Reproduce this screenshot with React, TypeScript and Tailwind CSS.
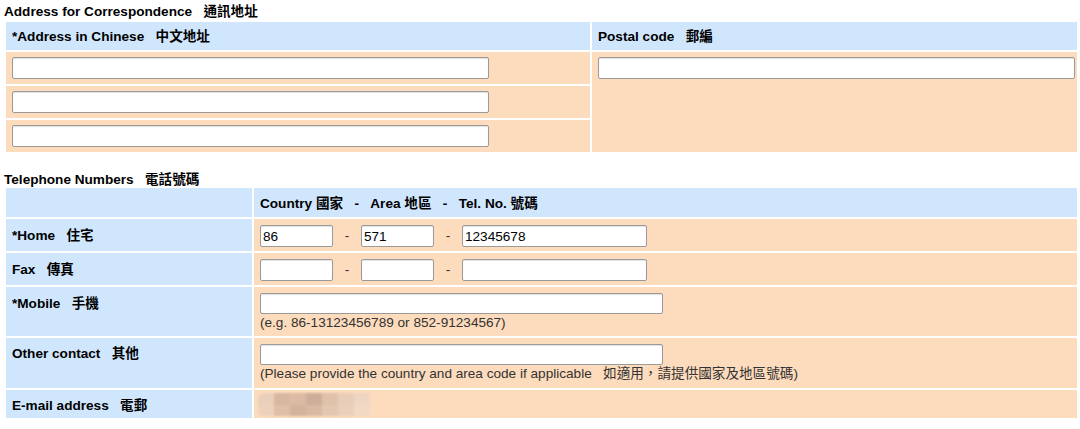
import React from "react";

const SP = "\u00a0\u00a0\u00a0";

function Field({ className, value = "" }: { className: string; value?: string }) {
  return (
    <input
      readOnly
      value={value}
      className={`block bg-white border border-[#9a9a9a] rounded-[2px] px-[2px] text-[13.6px] text-black outline-none shadow-[inset_0_1px_1px_rgba(0,0,0,0.12)] ${className}`}
    />
  );
}

function Dash() {
  return <span className="w-[28px] text-center text-[#333]">-</span>;
}

function Blur() {
  const top = ["#ead0bb", "#d8b79f", "#dbbba3", "#cdae98", "#e0c2aa", "#e8cdb8", "#efd6c2"];
  const bot = ["#ecd2bd", "#dfbfa7", "#d2b39c", "#d8b9a2", "#e4c7b0", "#eacfba", "#f1d9c6"];
  return (
    <div className="flex flex-col blur-[1px] rounded-[5px] overflow-hidden">
      <div className="flex">
        {top.map((c, i) => (
          <div key={i} className="w-[16px] h-[12px]" style={{ backgroundColor: c }} />
        ))}
      </div>
      <div className="flex">
        {bot.map((c, i) => (
          <div key={i} className="w-[16px] h-[11px]" style={{ backgroundColor: c }} />
        ))}
      </div>
    </div>
  );
}

export default function App() {
  return (
    <div className="w-[1080px] h-[429px] overflow-hidden bg-white pl-[4px] text-[13.6px] leading-[16px] text-black font-[family-name:Liberation_Sans,Arial,Noto_Sans_CJK_TC,sans-serif]">
      <div className="h-[20px] pt-[2px] leading-[20px] font-bold">
        Address for Correspondence{SP}通訊地址
      </div>
      <div className="grid w-fit grid-cols-[584px_485px] grid-rows-[28px_32px_32px_32px] gap-[2px] p-[2px]">
        <div className="bg-[#d0e6fd] pl-[6px] pt-[7px] font-bold">*Address in Chinese{SP}中文地址</div>
        <div className="bg-[#d0e6fd] pl-[6px] pt-[7px] font-bold">Postal code{SP}郵編</div>
        <div className="bg-[#fddbbd] pl-[6px] pt-[5px]">
          <Field className="w-[477px] h-[22px]" />
        </div>
        <div className="row-span-3 bg-[#fddbbd] pl-[6px] pt-[5px]">
          <Field className="w-[477px] h-[22px]" />
        </div>
        <div className="bg-[#fddbbd] pl-[6px] pt-[5px]">
          <Field className="w-[477px] h-[22px]" />
        </div>
        <div className="bg-[#fddbbd] pl-[6px] pt-[5px]">
          <Field className="w-[477px] h-[22px]" />
        </div>
      </div>

      <div className="mt-[19px] h-[13px] leading-[13px] font-bold">
        Telephone Numbers{SP}電話號碼
      </div>
      <div className="grid w-fit grid-cols-[246px_823px] grid-rows-[29px_32px_32px_49px_50px_28px] gap-[2px] p-[2px]">
        <div className="bg-[#d0e6fd]" />
        <div className="bg-[#d0e6fd] pl-[6px] pt-[8px] font-bold">
          Country 國家{SP}-{SP}Area 地區{SP}-{SP}Tel. No. 號碼
        </div>

        <div className="bg-[#d0e6fd] pl-[6px] pt-[9px] font-bold">*Home{SP}住宅</div>
        <div className="flex items-start bg-[#fddbbd] pl-[6px] pt-[6px]">
          <Field className="w-[73px] h-[22px]" value="86" />
          <div className="flex h-[22px] items-center"><Dash /></div>
          <Field className="w-[73px] h-[22px]" value="571" />
          <div className="flex h-[22px] items-center"><Dash /></div>
          <Field className="w-[185px] h-[22px]" value="12345678" />
        </div>

        <div className="bg-[#d0e6fd] pl-[6px] pt-[9px] font-bold">Fax{SP}傳真</div>
        <div className="flex items-start bg-[#fddbbd] pl-[6px] pt-[6px]">
          <Field className="w-[73px] h-[22px]" />
          <div className="flex h-[22px] items-center"><Dash /></div>
          <Field className="w-[73px] h-[22px]" />
          <div className="flex h-[22px] items-center"><Dash /></div>
          <Field className="w-[185px] h-[22px]" />
        </div>

        <div className="bg-[#d0e6fd] pl-[6px] pt-[9px] font-bold">*Mobile{SP}手機</div>
        <div className="bg-[#fddbbd] pl-[6px] pt-[6px]">
          <Field className="w-[403px] h-[21px]" />
          <div className="leading-[18px] text-[#333]">(e.g. 86-13123456789 or 852-91234567)</div>
        </div>

        <div className="bg-[#d0e6fd] pl-[6px] pt-[8px] font-bold">Other contact{SP}其他</div>
        <div className="bg-[#fddbbd] pl-[6px] pt-[6px]">
          <Field className="w-[403px] h-[21px]" />
          <div className="leading-[18px] text-[#333]">
            (Please provide the country and area code if applicable{SP}如適用，請提供國家及地區號碼)
          </div>
        </div>

        <div className="bg-[#d0e6fd] pl-[6px] pt-[8px] font-bold">E-mail address{SP}電郵</div>
        <div className="bg-[#fddbbd] pl-[4px] pt-[3px]">
          <Blur />
        </div>
      </div>
    </div>
  );
}
